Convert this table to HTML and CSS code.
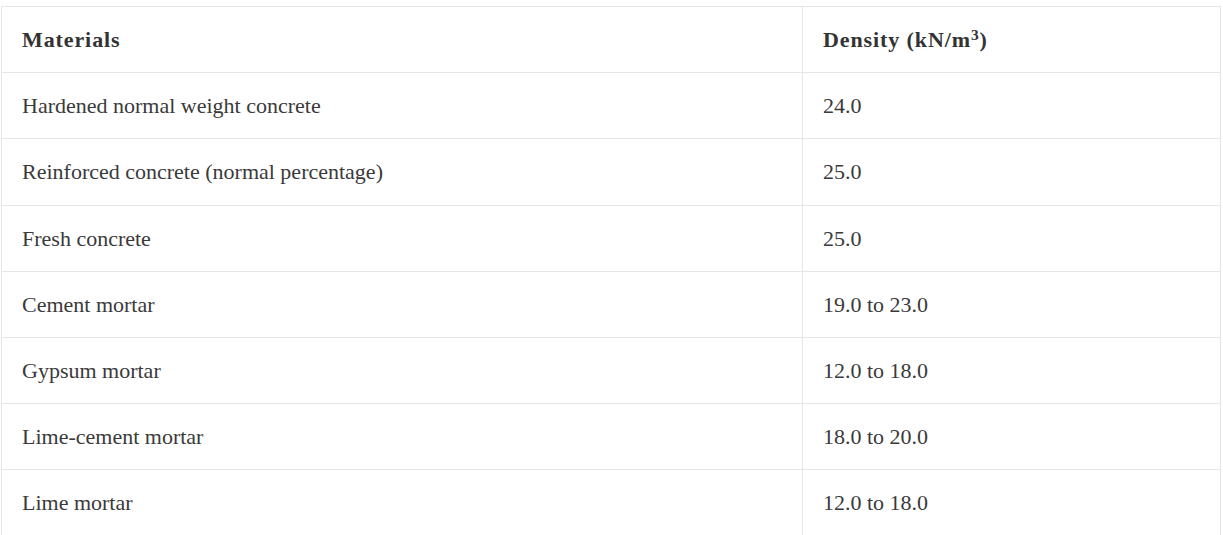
FILE: index.html
```html
<!DOCTYPE html>
<html>
<head>
<meta charset="utf-8">
<link rel="stylesheet" href="styles.css">
</head>
<body>
<div class="wrap">
<table class="density">
<thead>
<tr><th class="c1">Materials</th><th class="c2">Density (kN/m<sup>3</sup>)</th></tr>
</thead>
<tbody>
<tr><td>Hardened normal weight concrete</td><td>24.0</td></tr>
<tr><td>Reinforced concrete (normal percentage)</td><td>25.0</td></tr>
<tr><td>Fresh concrete</td><td>25.0</td></tr>
<tr><td>Cement mortar</td><td>19.0 to 23.0</td></tr>
<tr><td>Gypsum mortar</td><td>12.0 to 18.0</td></tr>
<tr><td>Lime-cement mortar</td><td>18.0 to 20.0</td></tr>
<tr><td>Lime mortar</td><td>12.0 to 18.0</td></tr>
</tbody>
</table>
</div>
</body>
</html>
```
FILE: styles.css
```css
html, body {
  margin: 0;
  padding: 0;
  background: #ffffff;
}
.wrap {
  padding: 6px 2px 0 1px;
}
.density {
  width: 100%;
  border-collapse: collapse;
  font-family: "Liberation Serif", "Times New Roman", serif;
  font-size: 22px;
  color: #3a3a3a;
  table-layout: fixed;
}
.density th, .density td {
  border: 1px solid #e6e6e6;
  padding: 20px 20px;
  line-height: 25.2px;
  text-align: left;
  vertical-align: middle;
}
.density th {
  font-weight: bold;
  color: #333333;
  letter-spacing: 0.9px;
}
.c1 { width: 760px; }
.density sup {
  font-size: 0.7em;
  line-height: 0;
  vertical-align: 0.45em;
}
```
